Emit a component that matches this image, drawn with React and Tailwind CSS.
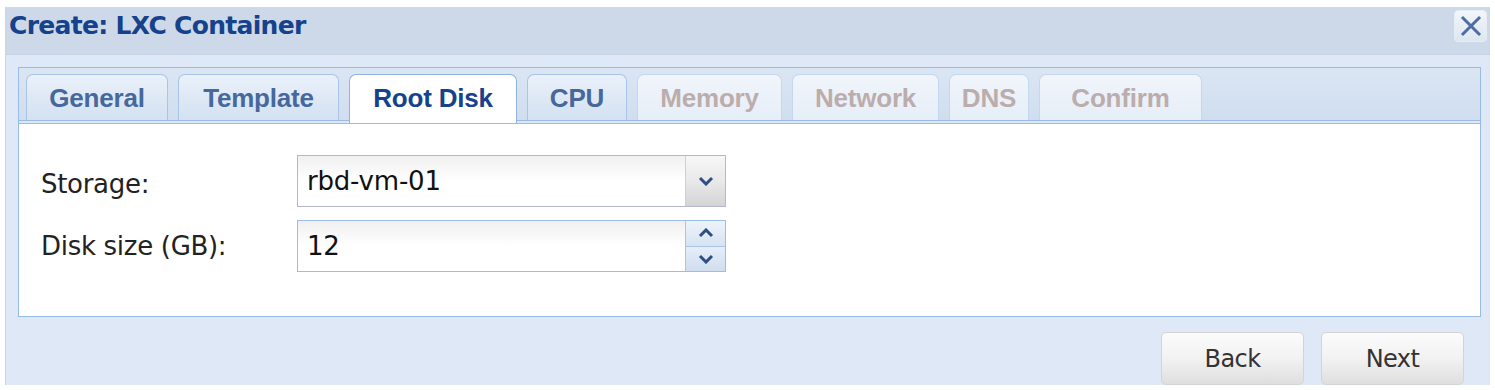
import React from "react";

const tahoma = { fontFamily: '"DejaVu Sans", "Liberation Sans", sans-serif' };

function Tab({ label, w, state }) {
  const base =
    "h-[46px] flex items-center justify-center rounded-t-[7px] border border-b-0 font-bold text-[26px] tracking-[-0.2px] pt-[2px]";
  let cls = "";
  if (state === "active") cls = "bg-white border-[#8db2e3] text-[#15428b] h-[49px] -mb-[3px] z-10 pb-[3px]";
  else if (state === "enabled")
    cls = "bg-gradient-to-b from-[#eaf1fa] to-[#d3e1f1] border-[#a9c4e8] text-[#46689c]";
  else cls = "bg-gradient-to-b from-[#f1f5fb] to-[#e6eef8] border-[#c5d7ee] text-[#bcadad]";
  return (
    <div
      className={base + " " + cls}
      style={{ width: w, fontFamily: '"Liberation Sans", Arial, sans-serif' }}
    >
      {label}
    </div>
  );
}

export default function App() {
  const tabs = [
    ["General", 142, "enabled"],
    ["Template", 161, "enabled"],
    ["Root Disk", 168, "active"],
    ["CPU", 100, "enabled"],
    ["Memory", 145, "disabled"],
    ["Network", 147, "disabled"],
    ["DNS", 80, "disabled"],
    ["Confirm", 163, "disabled"],
  ];
  return (
    <div className="w-[1495px] h-[390px] bg-white pt-[7px] pl-[5px]">
      <div className="w-[1485px] h-[378px] bg-[#dfe8f6] flex flex-col border-l border-[#c9d6e8]">
        {/* title bar */}
        <div className="h-[48px] bg-[#cdd9e8] flex items-start justify-between pl-[3px] pr-[3px] border-b border-[#c3d2e6]">
          <div
            className="mt-[0px] text-[25px] font-bold text-[#15428b] tracking-[-0.7px]"
            style={tahoma}
          >
            Create: LXC Container
          </div>
          <div className="mt-[3px] w-[33px] h-[32px] rounded-[4px] border border-[#e6edf6] bg-gradient-to-b from-[#f3f6fa] to-[#dde6f1] flex items-center justify-center">
            <svg width="24" height="24" viewBox="0 0 24 24">
              <path d="M4 4 L20 20 M20 4 L4 20" stroke="#4d6ea5" strokeWidth="3" strokeLinecap="square" />
            </svg>
          </div>
        </div>

        {/* tab panel */}
        <div className="ml-[12px] mt-[12px] w-[1463px] flex flex-col">
          <div className="h-[56px] border border-[#99bbe8] border-b-0 bg-gradient-to-b from-[#dbe6f4] to-[#cfddef] flex flex-col">
            <div className="flex items-end gap-[10px] pl-[7px] pt-[6px] h-[52px]">
              {tabs.map(([l, w, s]) => (
                <Tab key={l} label={l} w={w} state={s} />
              ))}
            </div>
            <div className="h-[4px] bg-[#dfe8f6] border-t border-[#99bbe8]"></div>
          </div>
          <div className="h-[194px] bg-white border border-[#99bbe8] flex flex-col pt-[31px] pl-[22px] gap-[13px]">
            <div className="flex items-center h-[52px]">
              <div className="w-[256px] text-[26px] text-[#222] tracking-[-0.3px] pt-[6px]" style={tahoma}>
                Storage:
              </div>
              <div className="flex h-[52px] w-[429px] border border-[#b5b8c8]">
                <div
                  className="flex-1 flex items-center pl-[9px] text-[26px] text-[#111] bg-gradient-to-b from-[#f0f0f0] via-white to-white tracking-[-0.2px]"
                  style={tahoma}
                >
                  rbd-vm-01
                </div>
                <div className="w-[40px] border-l border-[#d0d0d0] bg-gradient-to-b from-[#f7f7f7] via-[#e9e9e9] to-[#d4d4d4] flex items-center justify-center">
                  <svg width="16" height="10" viewBox="0 0 16 10">
                    <path d="M2 2 L8 8 L14 2" fill="none" stroke="#2d4f86" strokeWidth="3" />
                  </svg>
                </div>
              </div>
            </div>
            <div className="flex items-center h-[52px]">
              <div className="w-[256px] text-[26px] text-[#222] tracking-[-0.3px]" style={tahoma}>
                Disk size (GB):
              </div>
              <div className="flex h-[52px] w-[429px] border border-[#9ebde4]">
                <div
                  className="flex-1 flex items-center pl-[9px] text-[26px] text-[#111] bg-gradient-to-b from-[#f0f0f0] via-white to-white tracking-[-0.2px]"
                  style={tahoma}
                >
                  12
                </div>
                <div className="w-[40px] border-l border-[#a9c4e6] flex flex-col">
                  <div className="flex-1 bg-gradient-to-b from-[#eef3fa] to-[#d7e3f2] flex items-center justify-center border-b border-[#a9c4e6]">
                    <svg width="16" height="10" viewBox="0 0 16 10">
                      <path d="M2 8 L8 2 L14 8" fill="none" stroke="#2d4f86" strokeWidth="3" />
                    </svg>
                  </div>
                  <div className="flex-1 bg-gradient-to-b from-[#e6eef8] to-[#d0def0] flex items-center justify-center">
                    <svg width="16" height="10" viewBox="0 0 16 10">
                      <path d="M2 2 L8 8 L14 2" fill="none" stroke="#2d4f86" strokeWidth="3" />
                    </svg>
                  </div>
                </div>
              </div>
            </div>
          </div>
        </div>

        {/* buttons */}
        <div className="flex justify-end gap-[17px] pr-[26px] mt-[15px]">
          {["Back", "Next"].map((b) => (
            <div
              key={b}
              className="w-[143px] h-[53px] rounded-[5px] border border-[#d4d4d4] bg-gradient-to-b from-[#fbfbfb] via-[#f2f2f2] to-[#dedede] flex items-center justify-center text-[24px] text-[#333] tracking-[-0.6px]"
              style={tahoma}
            >
              {b}
            </div>
          ))}
        </div>
      </div>
    </div>
  );
}
